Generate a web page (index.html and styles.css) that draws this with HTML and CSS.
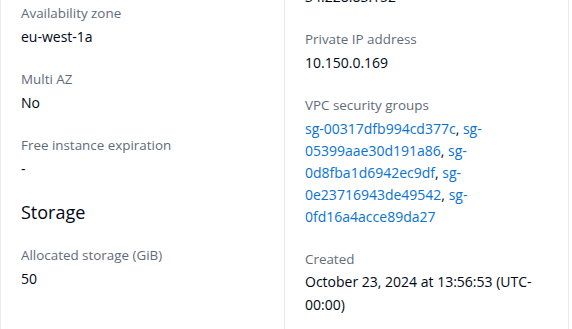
FILE: index.html
```html
<!doctype html>
<html lang="en">
  <head>
    <meta charset="UTF-8" />
    <meta name="viewport" content="width=device-width, initial-scale=1.0" />
    <title>Instance details</title>
    <link rel="stylesheet" href="styles.css">
  </head>
  <body>
    <div class="details">
      <div class="column">
        <div class="field">
          <div class="label">Availability zone</div>
          <div class="value">eu-west-1a</div>
        </div>
        <div class="field">
          <div class="label">Multi AZ</div>
          <div class="value">No</div>
        </div>
        <div class="field">
          <div class="label">Free instance expiration</div>
          <div class="value">-</div>
        </div>
        <h2 class="section-title">Storage</h2>
        <div class="field">
          <div class="label">Allocated storage (GiB)</div>
          <div class="value">50</div>
        </div>
      </div>
      <div class="column">
        <div class="field field-cut">
          <div class="value">34.228.83.152</div>
        </div>
        <div class="field">
          <div class="label">Private IP address</div>
          <div class="value">10.150.0.169</div>
        </div>
        <div class="field">
          <div class="label">VPC security groups</div>
          <div class="value value-links">
            <a href="#">sg-00317dfb994cd377c</a>, <a href="#">sg-05399aae30d191a86</a>, <a href="#">sg-0d8fba1d6942ec9df</a>, <a href="#">sg-0e23716943de49542</a>, <a href="#">sg-0fd16a4acce89da27</a>
          </div>
        </div>
        <div class="field">
          <div class="label">Created</div>
          <div class="value">October 23, 2024 at 13:56:53 (UTC-00:00)</div>
        </div>
      </div>
    </div>
  </body>
</html>
```

FILE: styles.css
```css
* {
  margin: 0;
  padding: 0;
  box-sizing: border-box;
}
body {
  background: #fff;
  font-family: "Open Sans", "Noto Sans", sans-serif;
  font-size: 14px;
  line-height: 22.5px;
  color: #000716;
  overflow: hidden;
}
.details {
  display: grid;
  grid-template-columns: 283px 284px;
  width: 569px;
  height: 329px;
  border-left: 1px solid #e9ebed;
  border-right: 1px solid #e9ebed;
}
.column {
  padding: 2px 20px 0 20px;
  display: flex;
  flex-direction: column;
  gap: 20px;
}
.column + .column {
  border-left: 1px solid #e9ebed;
}
.field {
  display: flex;
  flex-direction: column;
  gap: 1px;
}
.field-cut {
  margin-top: -16.5px;
}
.label {
  color: #5f6b7a;
  font-size: 13.4px;
}
.value {
  color: #000716;
}
.value-links {
  line-height: 22px;
}
.value a {
  color: #0972d3;
  text-decoration: none;
}
.section-title {
  font-size: 18px;
  font-weight: normal;
  line-height: 24px;
}
```
